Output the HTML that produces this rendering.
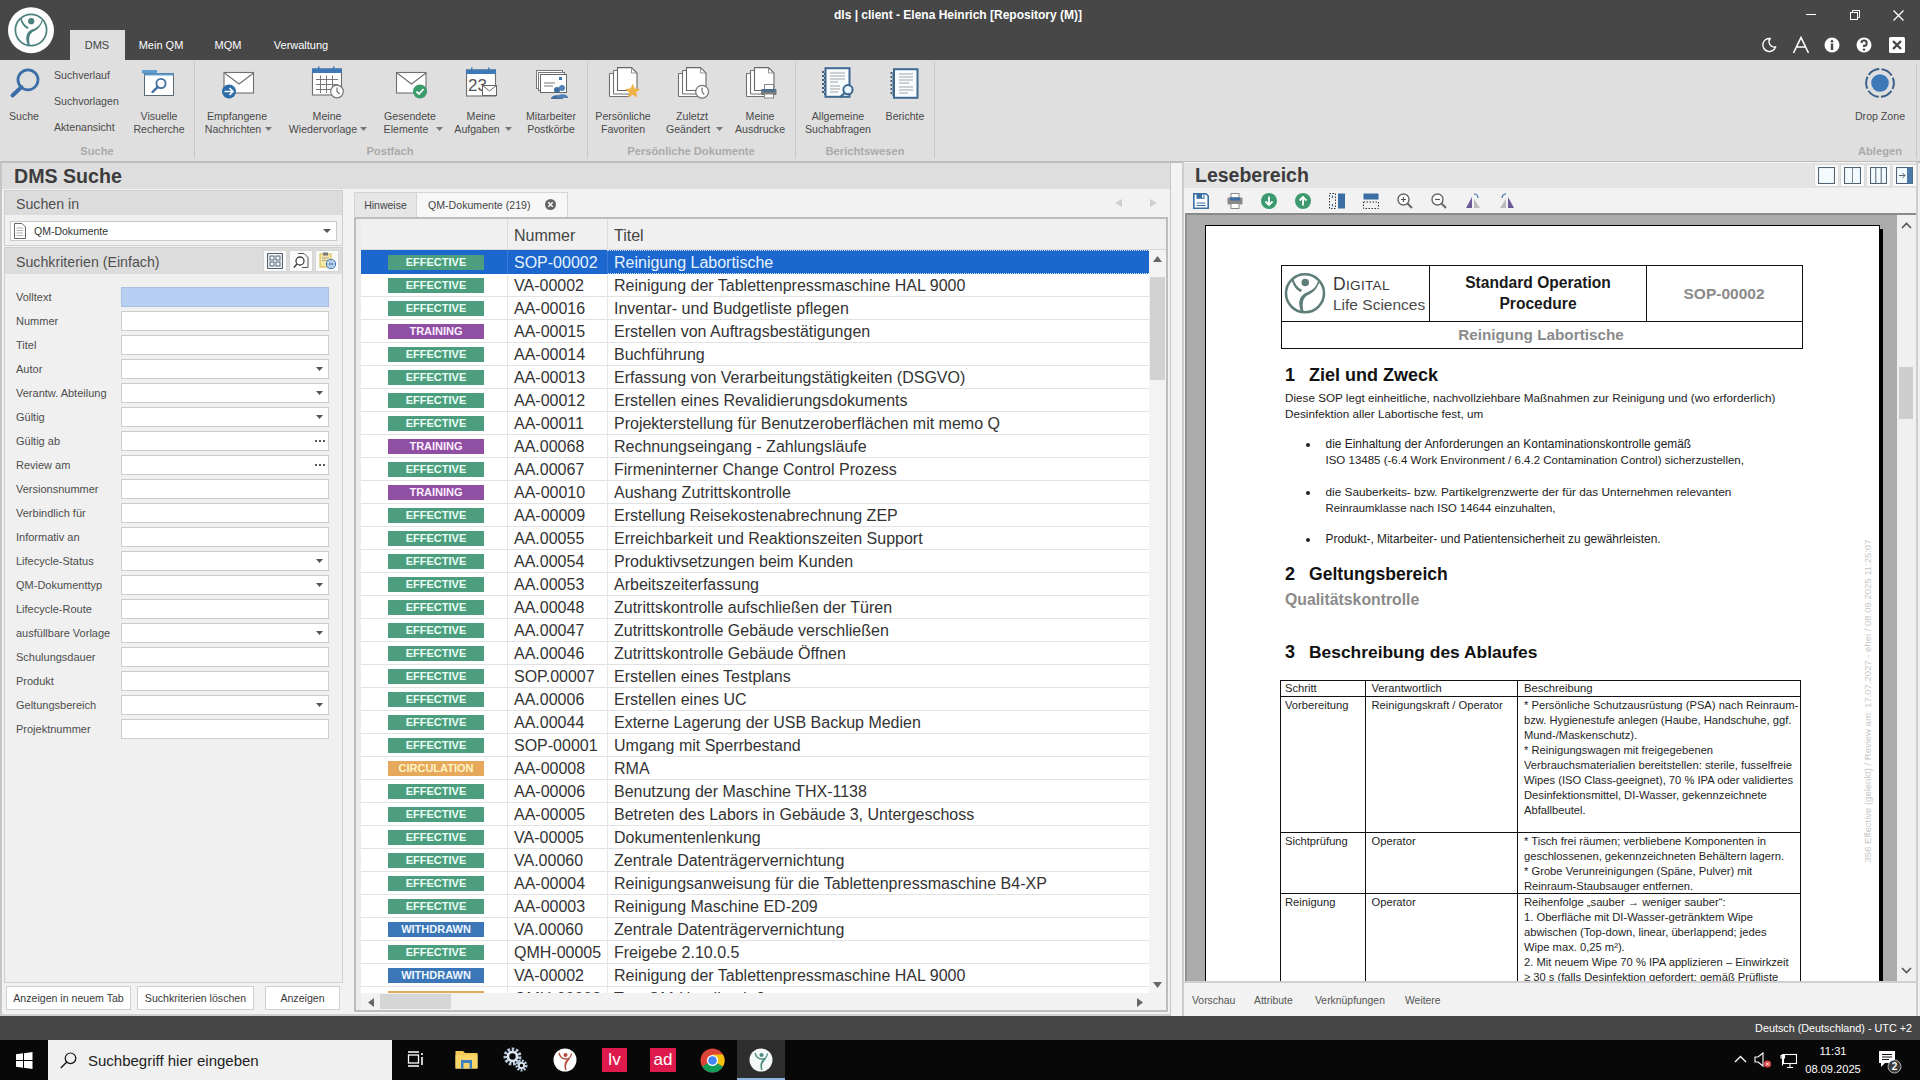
<!DOCTYPE html>
<html><head><meta charset="utf-8"><title>dls client</title><style>*{margin:0;padding:0;box-sizing:border-box}
html,body{width:1920px;height:1080px;overflow:hidden;background:#f0f0f0;font-family:"Liberation Sans",sans-serif}
body>div,body>svg{position:absolute}
.r>div{position:absolute}
</style></head>
<body>
<div style="left:0px;top:0px;width:1920px;height:60px;background:#474747"></div>
<svg style="position:absolute;left:7px;top:6px;" width="48" height="48" viewBox="0 0 48 48"><circle cx="24" cy="24.2" r="23" fill="#fdfdfd"/>
<circle cx="24" cy="24" r="15.6" fill="none" stroke="#4a817d" stroke-width="1.7"/>
<circle cx="24.2" cy="15.2" r="3.1" fill="#4a817d"/>
<path d="M13.2 12.6 L14.6 12.1 C15.6 16.6 18 19.6 21.6 21.2 L20.6 23 C16.6 21 14 17.6 13.2 12.6 Z" fill="#4a817d"/>
<path d="M34.6 14.2 C33.5 19 29.5 22 25 23.5 C21 25 19 29 19.3 33 C19.5 36 20.3 38 21 39.4 L23 39.4 C22.3 37 22 35 22.2 32.5 C22.5 28.5 24.5 26 27.5 25 C31 23.5 34 20 35.9 14.8 Z" fill="#4a817d"/></svg>
<div style="left:358px;top:6.5px;width:1200px;text-align:center;font-size:12px;color:#fff;font-weight:700;line-height:17px;white-space:pre;">dls | client - Elena Heinrich [Repository (M)]</div>
<div style="left:1806px;top:14px;width:10px;height:1px;background:#fff"></div>
<svg style="position:absolute;left:1850px;top:10px;" width="11" height="11" viewBox="0 0 11 11"><rect x="0.5" y="2.5" width="7" height="7" fill="none" stroke="#fff"/><path d="M2.5 2.5 V0.5 H9.5 V7.5 H7.5" fill="none" stroke="#fff"/></svg>
<svg style="position:absolute;left:1893px;top:10px;" width="11" height="11" viewBox="0 0 11 11"><path d="M0.5 0.5 L10.5 10.5 M10.5 0.5 L0.5 10.5" stroke="#fff" stroke-width="1.3"/></svg>
<div style="left:70px;top:30px;width:55px;height:30px;background:#dfdfdf"></div>
<div style="left:-503px;top:37.5px;width:1200px;text-align:center;font-size:11px;color:#444;font-weight:400;line-height:15px;white-space:pre;">DMS</div>
<div style="left:-439px;top:37.5px;width:1200px;text-align:center;font-size:11px;color:#fff;font-weight:400;line-height:15px;white-space:pre;">Mein QM</div>
<div style="left:-372px;top:37.5px;width:1200px;text-align:center;font-size:11px;color:#fff;font-weight:400;line-height:15px;white-space:pre;">MQM</div>
<div style="left:-299px;top:37.5px;width:1200px;text-align:center;font-size:11px;color:#fff;font-weight:400;line-height:15px;white-space:pre;">Verwaltung</div>
<svg style="position:absolute;left:1761px;top:37px;" width="16" height="16" viewBox="0 0 16 16"><path d="M9 1.5 A6.5 6.5 0 1 0 14.5 10 A5.5 5.5 0 0 1 9 1.5 Z" fill="none" stroke="#fff" stroke-width="1.4"/></svg>
<svg style="position:absolute;left:1792px;top:36px;" width="18" height="18" viewBox="0 0 18 18"><path d="M1.5 17 L9 1.5 L16.5 17 M4.5 11 H13.5" fill="none" stroke="#fff" stroke-width="1.6"/></svg>
<svg style="position:absolute;left:1824px;top:37px;" width="16" height="16" viewBox="0 0 16 16"><circle cx="8" cy="8" r="7.5" fill="#fff"/><rect x="6.8" y="6.5" width="2.4" height="6.5" fill="#474747"/><circle cx="8" cy="4.2" r="1.3" fill="#474747"/></svg>
<svg style="position:absolute;left:1856px;top:37px;" width="16" height="16" viewBox="0 0 16 16"><circle cx="8" cy="8" r="7.5" fill="#fff"/><path d="M5.5 6 A2.6 2.6 0 1 1 8 8.8 V10" fill="none" stroke="#474747" stroke-width="2"/><circle cx="8" cy="12.6" r="1.2" fill="#474747"/></svg>
<svg style="position:absolute;left:1889px;top:37px;" width="16" height="16" viewBox="0 0 16 16"><rect x="0" y="0" width="16" height="16" rx="1.5" fill="#fff"/><path d="M4 4 L12 12 M12 4 L4 12" stroke="#474747" stroke-width="2.4"/></svg>
<div style="left:0px;top:60px;width:1920px;height:101px;background:#dfdfdf"></div>
<div style="left:0px;top:161px;width:1920px;height:2px;background:#bdbdbd"></div>
<div style="left:194px;top:62px;width:1px;height:96px;background:#c8c8c8"></div>
<div style="left:587px;top:62px;width:1px;height:96px;background:#c8c8c8"></div>
<div style="left:795px;top:62px;width:1px;height:96px;background:#c8c8c8"></div>
<div style="left:934px;top:62px;width:1px;height:96px;background:#c8c8c8"></div>
<svg style="position:absolute;left:9px;top:67px;" width="32" height="32" viewBox="0 0 32 32"><circle cx="19" cy="12.8" r="10" fill="none" stroke="#3b6ea8" stroke-width="2.8"/><path d="M12.5 20 L3.5 28.5" stroke="#3b6ea8" stroke-width="4" stroke-linecap="round"/></svg>
<div style="left:-576px;top:109.0px;width:1200px;text-align:center;font-size:10.6px;color:#4a4a4a;font-weight:400;line-height:15px;white-space:pre;">Suche</div>
<div style="left:54px;top:67.5px;font-size:10.6px;color:#4a4a4a;font-weight:400;line-height:15px;white-space:pre;">Suchverlauf</div>
<div style="left:54px;top:93.5px;font-size:10.6px;color:#4a4a4a;font-weight:400;line-height:15px;white-space:pre;">Suchvorlagen</div>
<div style="left:54px;top:119.5px;font-size:10.6px;color:#4a4a4a;font-weight:400;line-height:15px;white-space:pre;">Aktenansicht</div>
<svg style="position:absolute;left:142px;top:69px;" width="34" height="30" viewBox="0 0 34 30"><rect x="0" y="1" width="15" height="3.5" fill="#5ba0d0"/><rect x="2.5" y="4.5" width="29" height="22" fill="#fff" stroke="#5a6b78" stroke-width="1"/><rect x="2.5" y="4.5" width="29" height="2" fill="#5ba0d0"/><circle cx="19" cy="14.5" r="4.6" fill="none" stroke="#3f6d9e" stroke-width="1.8"/><path d="M15.8 17.8 L10.5 23" stroke="#3f6d9e" stroke-width="2.4" stroke-linecap="round"/></svg>
<div style="left:-441px;top:109.0px;width:1200px;text-align:center;font-size:10.6px;color:#4a4a4a;font-weight:400;line-height:15px;white-space:pre;">Visuelle</div>
<div style="left:-441px;top:121.5px;width:1200px;text-align:center;font-size:10.6px;color:#4a4a4a;font-weight:400;line-height:15px;white-space:pre;">Recherche</div>
<div style="left:-503px;top:143.0px;width:1200px;text-align:center;font-size:11.2px;color:#aaa;font-weight:700;line-height:16px;white-space:pre;">Suche</div>
<svg style="position:absolute;left:219px;top:70px;" width="38" height="32" viewBox="0 0 38 32"><rect x="5" y="2.5" width="29.5" height="20.5" fill="#fff" stroke="#6f6f6f" stroke-width="1.1"/><path d="M5.5 3 L20 14 L34.5 3" fill="none" stroke="#6f6f6f" stroke-width="1.1"/><circle cx="10" cy="21.5" r="7" fill="#2f6daa"/><path d="M5.5 21.5 H14 M10.5 18 L14 21.5 L10.5 25" fill="none" stroke="#fff" stroke-width="1.6"/></svg>
<div style="left:-363px;top:109.0px;width:1200px;text-align:center;font-size:10.6px;color:#4a4a4a;font-weight:400;line-height:15px;white-space:pre;">Empfangene</div>
<div style="left:-367px;top:121.5px;width:1200px;text-align:center;font-size:10.6px;color:#4a4a4a;font-weight:400;line-height:15px;white-space:pre;">Nachrichten</div>
<svg style="position:absolute;left:265px;top:127px;" width="7" height="4" viewBox="0 0 7 4"><path d="M0 0 H7 L3.5 4 Z" fill="#777"/></svg>
<svg style="position:absolute;left:310px;top:66px;" width="36" height="33" viewBox="0 0 36 33"><rect x="2.5" y="3" width="29" height="26" fill="#fff" stroke="#6f6f6f" stroke-width="1.1"/><rect x="2" y="2.5" width="30" height="4.5" fill="#3f78b6"/><rect x="8" y="0.5" width="1.5" height="4" fill="#3f78b6"/><rect x="23" y="0.5" width="1.5" height="4" fill="#3f78b6"/><path d="M6 13.5 H28 M6 18.5 H28 M6 23.5 H22 M10.5 9.5 V27 M16.5 9.5 V27 M22.5 9.5 V21" stroke="#777" stroke-width="1"/><circle cx="27" cy="25.5" r="6.3" fill="#fff" stroke="#777" stroke-width="1.2"/><path d="M27 21.5 V25.5 L29.5 28" fill="none" stroke="#666" stroke-width="1.1"/></svg>
<div style="left:-273px;top:109.0px;width:1200px;text-align:center;font-size:10.6px;color:#4a4a4a;font-weight:400;line-height:15px;white-space:pre;">Meine</div>
<div style="left:-277px;top:121.5px;width:1200px;text-align:center;font-size:10.6px;color:#4a4a4a;font-weight:400;line-height:15px;white-space:pre;">Wiedervorlage</div>
<svg style="position:absolute;left:360px;top:127px;" width="7" height="4" viewBox="0 0 7 4"><path d="M0 0 H7 L3.5 4 Z" fill="#777"/></svg>
<svg style="position:absolute;left:394px;top:70px;" width="36" height="32" viewBox="0 0 36 32"><rect x="2.5" y="2.5" width="29.5" height="20.5" fill="#fff" stroke="#6f6f6f" stroke-width="1.1"/><path d="M3 3 L17.5 14 L32 3" fill="none" stroke="#6f6f6f" stroke-width="1.1"/><circle cx="26" cy="21.5" r="7" fill="#3a9b6b"/><path d="M22.5 21.5 L25 24 L29.5 19" fill="none" stroke="#fff" stroke-width="1.8"/></svg>
<div style="left:-190px;top:109.0px;width:1200px;text-align:center;font-size:10.6px;color:#4a4a4a;font-weight:400;line-height:15px;white-space:pre;">Gesendete</div>
<div style="left:-194px;top:121.5px;width:1200px;text-align:center;font-size:10.6px;color:#4a4a4a;font-weight:400;line-height:15px;white-space:pre;">Elemente</div>
<svg style="position:absolute;left:436px;top:127px;" width="7" height="4" viewBox="0 0 7 4"><path d="M0 0 H7 L3.5 4 Z" fill="#777"/></svg>
<svg style="position:absolute;left:465px;top:67px;" width="34" height="33" viewBox="0 0 34 33"><rect x="1.5" y="3" width="29" height="26" fill="#fff" stroke="#6f6f6f" stroke-width="1.1"/><rect x="1" y="2.5" width="30" height="4.5" fill="#3f78b6"/><rect x="6" y="0.5" width="1.5" height="4" fill="#3f78b6"/><rect x="23" y="0.5" width="1.5" height="4" fill="#3f78b6"/><text x="3" y="24" font-family="Liberation Sans" font-size="17" fill="#555">23</text><rect x="17.5" y="18.5" width="14" height="10" fill="#fff" stroke="#666"/><path d="M17.5 18.5 L24.5 24 L31.5 18.5" fill="none" stroke="#666"/></svg>
<div style="left:-119px;top:109.0px;width:1200px;text-align:center;font-size:10.6px;color:#4a4a4a;font-weight:400;line-height:15px;white-space:pre;">Meine</div>
<div style="left:-123px;top:121.5px;width:1200px;text-align:center;font-size:10.6px;color:#4a4a4a;font-weight:400;line-height:15px;white-space:pre;">Aufgaben</div>
<svg style="position:absolute;left:505px;top:127px;" width="7" height="4" viewBox="0 0 7 4"><path d="M0 0 H7 L3.5 4 Z" fill="#777"/></svg>
<svg style="position:absolute;left:535px;top:69px;" width="34" height="32" viewBox="0 0 34 32"><rect x="1.5" y="1.5" width="26" height="18" fill="#fff" stroke="#777"/><rect x="3.5" y="3.5" width="26" height="18" fill="#fff" stroke="#777"/><rect x="5.5" y="5.5" width="26" height="18" fill="#fff" stroke="#666"/><rect x="24" y="8" width="3" height="3" fill="#3f78b6"/><path d="M9 14 H20 M9 17 H18" stroke="#777"/><circle cx="22" cy="21" r="3" fill="#3f6d9e"/><path d="M16 30 C16 25 28 25 28 30 Z" fill="#3f6d9e"/><circle cx="27" cy="19" r="3" fill="#4f80b6"/><path d="M22 29 C22 24 33 24 33 29 Z" fill="#4f80b6"/></svg>
<div style="left:-49px;top:109.0px;width:1200px;text-align:center;font-size:10.6px;color:#4a4a4a;font-weight:400;line-height:15px;white-space:pre;">Mitarbeiter</div>
<div style="left:-49px;top:121.5px;width:1200px;text-align:center;font-size:10.6px;color:#4a4a4a;font-weight:400;line-height:15px;white-space:pre;">Postkörbe</div>
<div style="left:-210px;top:143.0px;width:1200px;text-align:center;font-size:11.2px;color:#aaa;font-weight:700;line-height:16px;white-space:pre;">Postfach</div>
<svg style="position:absolute;left:608px;top:67px;" width="34" height="33" viewBox="0 0 34 33"><rect x="1.5" y="6.5" width="19.5" height="23" rx="0.8" fill="#fff" stroke="#707070" stroke-width="1.1"/><rect x="5.5" y="3.5" width="19.5" height="23.5" rx="0.8" fill="#fff" stroke="#707070" stroke-width="1.1"/><path d="M9.5 0.6 H23.5 L29 6 V23.5 H9.5 Z" fill="#fff" stroke="#666" stroke-width="1.1"/><path d="M23.5 0.6 V6 H29" fill="none" stroke="#888" stroke-width="0.9"/><path d="M24.7 16.5 L26.9 21.6 L32.3 21.9 L28.2 25.4 L29.5 30.8 L24.7 27.8 L19.9 30.8 L21.2 25.4 L17.1 21.9 L22.5 21.6 Z" fill="#f0b24a"/></svg>
<div style="left:23px;top:109.0px;width:1200px;text-align:center;font-size:10.6px;color:#4a4a4a;font-weight:400;line-height:15px;white-space:pre;">Persönliche</div>
<div style="left:23px;top:121.5px;width:1200px;text-align:center;font-size:10.6px;color:#4a4a4a;font-weight:400;line-height:15px;white-space:pre;">Favoriten</div>
<svg style="position:absolute;left:677px;top:67px;" width="34" height="33" viewBox="0 0 34 33"><rect x="1.5" y="6.5" width="19.5" height="23" rx="0.8" fill="#fff" stroke="#707070" stroke-width="1.1"/><rect x="5.5" y="3.5" width="19.5" height="23.5" rx="0.8" fill="#fff" stroke="#707070" stroke-width="1.1"/><path d="M9.5 0.6 H23.5 L29 6 V23.5 H9.5 Z" fill="#fff" stroke="#666" stroke-width="1.1"/><path d="M23.5 0.6 V6 H29" fill="none" stroke="#888" stroke-width="0.9"/><circle cx="25.1" cy="24.7" r="6.4" fill="#fff" stroke="#777" stroke-width="1.2"/><path d="M25.1 20.7 V24.9 L27.3 27.6" fill="none" stroke="#666" stroke-width="1.1"/></svg>
<div style="left:92px;top:109.0px;width:1200px;text-align:center;font-size:10.6px;color:#4a4a4a;font-weight:400;line-height:15px;white-space:pre;">Zuletzt</div>
<div style="left:88px;top:121.5px;width:1200px;text-align:center;font-size:10.6px;color:#4a4a4a;font-weight:400;line-height:15px;white-space:pre;">Geändert</div>
<svg style="position:absolute;left:716px;top:127px;" width="7" height="4" viewBox="0 0 7 4"><path d="M0 0 H7 L3.5 4 Z" fill="#777"/></svg>
<svg style="position:absolute;left:745px;top:67px;" width="34" height="33" viewBox="0 0 34 33"><rect x="1.5" y="6.5" width="19.5" height="23" rx="0.8" fill="#fff" stroke="#707070" stroke-width="1.1"/><rect x="5.5" y="3.5" width="19.5" height="23.5" rx="0.8" fill="#fff" stroke="#707070" stroke-width="1.1"/><path d="M9.5 0.6 H23.5 L29 6 V23.5 H9.5 Z" fill="#fff" stroke="#666" stroke-width="1.1"/><path d="M23.5 0.6 V6 H29" fill="none" stroke="#888" stroke-width="0.9"/><rect x="19.5" y="17.5" width="9" height="5" fill="#fff" stroke="#888"/><rect x="16" y="22" width="15.5" height="6" rx="1" fill="#7a7a7a"/><rect x="17" y="22" width="13.5" height="2.6" fill="#4a6f96"/><rect x="19.5" y="27" width="9" height="4" fill="#fff" stroke="#888"/></svg>
<div style="left:160px;top:109.0px;width:1200px;text-align:center;font-size:10.6px;color:#4a4a4a;font-weight:400;line-height:15px;white-space:pre;">Meine</div>
<div style="left:160px;top:121.5px;width:1200px;text-align:center;font-size:10.6px;color:#4a4a4a;font-weight:400;line-height:15px;white-space:pre;">Ausdrucke</div>
<div style="left:91px;top:143.0px;width:1200px;text-align:center;font-size:11.2px;color:#aaa;font-weight:700;line-height:16px;white-space:pre;">Persönliche Dokumente</div>
<svg style="position:absolute;left:821px;top:66px;" width="34" height="34" viewBox="0 0 34 34"><rect x="4.5" y="2.2" width="24" height="28.6" fill="#f7fcff" stroke="#3f6892" stroke-width="2"/><rect x="1" y="5" width="2" height="2" fill="#3d5f80"/><rect x="3" y="7" width="2" height="2" fill="#3d5f80"/><rect x="1" y="9" width="2" height="2" fill="#3d5f80"/><rect x="3" y="11" width="2" height="2" fill="#3d5f80"/><rect x="1" y="13" width="2" height="2" fill="#3d5f80"/><rect x="3" y="15" width="2" height="2" fill="#3d5f80"/><rect x="1" y="17" width="2" height="2" fill="#3d5f80"/><rect x="3" y="19" width="2" height="2" fill="#3d5f80"/><rect x="1" y="21" width="2" height="2" fill="#3d5f80"/><rect x="3" y="23" width="2" height="2" fill="#3d5f80"/><rect x="1" y="25" width="2" height="2" fill="#3d5f80"/><rect x="3" y="27" width="2" height="2" fill="#3d5f80"/><path d="M9 7 H24 M9 10 H24 M9 13 H24 M9 16 H17 M9 20 H19 M9 23 H19 M9 26 H17" stroke="#999" stroke-width="0.9"/><circle cx="27" cy="23.7" r="4.6" fill="#eaf4fb" stroke="#3f6892" stroke-width="2"/><path d="M23.5 27 L19.5 31" stroke="#3f6892" stroke-width="2.3" stroke-linecap="round"/></svg>
<div style="left:238px;top:109.0px;width:1200px;text-align:center;font-size:10.6px;color:#4a4a4a;font-weight:400;line-height:15px;white-space:pre;">Allgemeine</div>
<div style="left:238px;top:121.5px;width:1200px;text-align:center;font-size:10.6px;color:#4a4a4a;font-weight:400;line-height:15px;white-space:pre;">Suchabfragen</div>
<svg style="position:absolute;left:889px;top:66px;" width="34" height="34" viewBox="0 0 34 34"><rect x="5" y="3.2" width="23.5" height="28.6" fill="#f7fcff" stroke="#3f6892" stroke-width="2"/><rect x="1.5" y="6" width="2" height="2" fill="#3d5f80"/><rect x="3.5" y="8" width="2" height="2" fill="#3d5f80"/><rect x="1.5" y="10" width="2" height="2" fill="#3d5f80"/><rect x="3.5" y="12" width="2" height="2" fill="#3d5f80"/><rect x="1.5" y="14" width="2" height="2" fill="#3d5f80"/><rect x="3.5" y="16" width="2" height="2" fill="#3d5f80"/><rect x="1.5" y="18" width="2" height="2" fill="#3d5f80"/><rect x="3.5" y="20" width="2" height="2" fill="#3d5f80"/><rect x="1.5" y="22" width="2" height="2" fill="#3d5f80"/><rect x="3.5" y="24" width="2" height="2" fill="#3d5f80"/><rect x="1.5" y="26" width="2" height="2" fill="#3d5f80"/><rect x="3.5" y="28" width="2" height="2" fill="#3d5f80"/><path d="M10 8 H24 M10 11 H24 M10 14 H24 M10 17 H20 M10 21 H24 M10 24 H24 M10 27 H19" stroke="#999" stroke-width="0.9"/></svg>
<div style="left:305px;top:109.0px;width:1200px;text-align:center;font-size:10.6px;color:#4a4a4a;font-weight:400;line-height:15px;white-space:pre;">Berichte</div>
<div style="left:265px;top:143.0px;width:1200px;text-align:center;font-size:11.2px;color:#aaa;font-weight:700;line-height:16px;white-space:pre;">Berichtswesen</div>
<svg style="position:absolute;left:1864px;top:67px;" width="32" height="32" viewBox="0 0 32 32"><circle cx="16" cy="16" r="13.9" fill="none" stroke="#3d6088" stroke-width="2" stroke-dasharray="12.25 2.3" stroke-dashoffset="6.12"/><circle cx="16" cy="16" r="8.8" fill="#3d78b8"/></svg>
<div style="left:1916px;top:64px;width:1px;height:94px;background:#c8c8c8"></div>
<div style="left:1280px;top:109.0px;width:1200px;text-align:center;font-size:10.6px;color:#4a4a4a;font-weight:400;line-height:15px;white-space:pre;">Drop Zone</div>
<div style="left:1280px;top:143.0px;width:1200px;text-align:center;font-size:11.2px;color:#aaa;font-weight:700;line-height:16px;white-space:pre;">Ablegen</div>
<div style="left:0px;top:163px;width:1920px;height:853px;background:#f0f0f0"></div>
<div style="left:0px;top:1016px;width:1920px;height:24px;background:#474747"></div>
<div style="left:712px;top:1020.5px;width:1200px;text-align:right;font-size:10.8px;color:#fff;font-weight:400;line-height:15px;white-space:pre;">Deutsch (Deutschland) - UTC +2</div>
<div style="left:0px;top:1040px;width:1920px;height:40px;background:#080808"></div>
<div style="left:0px;top:163px;width:1171px;height:853px;background:#f2f2f2;border-left:2px solid #c6c6c6;border-right:1px solid #c6c6c6;border-bottom:2px solid #d0d0d0"></div>
<div style="left:2px;top:163px;width:1168px;height:26px;background:#dedede"></div>
<div style="left:14px;top:163.0px;font-size:19.6px;color:#3c3c3c;font-weight:700;line-height:27px;white-space:pre;">DMS Suche</div>
<div style="left:4px;top:190px;width:339px;height:56px;background:#f0f0f0;border:1px solid #cfcfcf"></div>
<div style="left:5px;top:191px;width:337px;height:24px;background:#dcdcdc"></div>
<div style="left:16px;top:193.5px;font-size:14.2px;color:#505050;font-weight:400;line-height:20px;white-space:pre;">Suchen in</div>
<div style="left:10px;top:221px;width:327px;height:20px;background:#fff;border:1px solid #c9c9c9"></div>
<svg style="position:absolute;left:14px;top:223px;" width="12" height="16" viewBox="0 0 12 16"><path d="M0.5 0.5 H8 L11.5 4 V15.5 H0.5 Z" fill="#fff" stroke="#666"/><path d="M2.5 5 H9 M2.5 7.5 H9 M2.5 10 H9 M2.5 12.5 H9" stroke="#999" stroke-width="0.8"/></svg>
<div style="left:34px;top:223.5px;font-size:10.5px;color:#333;font-weight:400;line-height:15px;white-space:pre;">QM-Dokumente</div>
<svg style="position:absolute;left:323px;top:229px;" width="8" height="4" viewBox="0 0 8 4"><path d="M0 0 H8 L4 4 Z" fill="#555"/></svg>
<div style="left:4px;top:247px;width:339px;height:736px;background:#f0f0f0;border:1px solid #cfcfcf"></div>
<div style="left:5px;top:248px;width:337px;height:26px;background:#dcdcdc"></div>
<div style="left:16px;top:251.5px;font-size:14.2px;color:#505050;font-weight:400;line-height:20px;white-space:pre;">Suchkriterien (Einfach)</div>
<div style="left:263px;top:250px;width:24px;height:22px;background:#fafafa;border:1px solid #d6d6d6"></div>
<div style="left:289px;top:250px;width:24px;height:22px;background:#fafafa;border:1px solid #d6d6d6"></div>
<div style="left:315px;top:250px;width:24px;height:22px;background:#fafafa;border:1px solid #d6d6d6"></div>
<svg style="position:absolute;left:267px;top:253px;" width="16" height="16" viewBox="0 0 16 16"><rect x="0.5" y="0.5" width="15" height="15" rx="1" fill="none" stroke="#4f6272" stroke-width="1.2"/><rect x="3" y="3" width="4" height="4" fill="none" stroke="#4f6272"/><rect x="9" y="3" width="4" height="4" fill="none" stroke="#4f6272"/><rect x="3" y="9" width="4" height="4" fill="none" stroke="#4f6272"/><rect x="9" y="9" width="4" height="4" fill="none" stroke="#4f6272"/></svg>
<svg style="position:absolute;left:293px;top:253px;" width="16" height="16" viewBox="0 0 16 16"><path d="M5 0.5 H11 L15 4.5 V14.5 H9" fill="none" stroke="#555"/><circle cx="7" cy="8" r="4" fill="#fff" stroke="#444" stroke-width="1.3"/><path d="M4 11 L0.8 14.5" stroke="#444" stroke-width="1.6"/></svg>
<svg style="position:absolute;left:319px;top:252px;" width="17" height="17" viewBox="0 0 17 17"><rect x="1" y="2" width="11" height="13" fill="#f5e7a8" stroke="#d8b74a"/><rect x="4" y="0.5" width="5" height="3" fill="#777"/><path d="M3 6 H10 M3 8.5 H10" stroke="#999" stroke-width="0.8"/><circle cx="12" cy="12" r="4.5" fill="#fff" stroke="#3f78b6" stroke-width="1.2"/><path d="M7.5 12 H16.5 M12 7.5 V16.5 M9.5 9 C11 11 11 13 9.5 15 M14.5 9 C13 11 13 13 14.5 15" fill="none" stroke="#3f78b6" stroke-width="0.8"/></svg>
<div style="left:16px;top:288.5px;font-size:11.0px;color:#4d4d4d;font-weight:400;line-height:16px;white-space:pre;">Volltext</div>
<div style="left:121px;top:287px;width:208px;height:20px;background:#b7cff2;border:1px solid #a9bfdf"></div>
<div style="left:16px;top:312.5px;font-size:11.0px;color:#4d4d4d;font-weight:400;line-height:16px;white-space:pre;">Nummer</div>
<div style="left:121px;top:311px;width:208px;height:20px;background:#fff;border:1px solid #cdcdcd"></div>
<div style="left:16px;top:336.5px;font-size:11.0px;color:#4d4d4d;font-weight:400;line-height:16px;white-space:pre;">Titel</div>
<div style="left:121px;top:335px;width:208px;height:20px;background:#fff;border:1px solid #cdcdcd"></div>
<div style="left:16px;top:360.5px;font-size:11.0px;color:#4d4d4d;font-weight:400;line-height:16px;white-space:pre;">Autor</div>
<div style="left:121px;top:359px;width:208px;height:20px;background:#fff;border:1px solid #cdcdcd"></div>
<svg style="position:absolute;left:316px;top:367px;" width="7" height="4" viewBox="0 0 7 4"><path d="M0 0 H7 L3.5 4 Z" fill="#555"/></svg>
<div style="left:16px;top:384.5px;font-size:11.0px;color:#4d4d4d;font-weight:400;line-height:16px;white-space:pre;">Verantw. Abteilung</div>
<div style="left:121px;top:383px;width:208px;height:20px;background:#fff;border:1px solid #cdcdcd"></div>
<svg style="position:absolute;left:316px;top:391px;" width="7" height="4" viewBox="0 0 7 4"><path d="M0 0 H7 L3.5 4 Z" fill="#555"/></svg>
<div style="left:16px;top:408.5px;font-size:11.0px;color:#4d4d4d;font-weight:400;line-height:16px;white-space:pre;">Gültig</div>
<div style="left:121px;top:407px;width:208px;height:20px;background:#fff;border:1px solid #cdcdcd"></div>
<svg style="position:absolute;left:316px;top:415px;" width="7" height="4" viewBox="0 0 7 4"><path d="M0 0 H7 L3.5 4 Z" fill="#555"/></svg>
<div style="left:16px;top:432.5px;font-size:11.0px;color:#4d4d4d;font-weight:400;line-height:16px;white-space:pre;">Gültig ab</div>
<div style="left:121px;top:431px;width:208px;height:20px;background:#fff;border:1px solid #cdcdcd"></div>
<svg style="position:absolute;left:315px;top:440px;" width="10" height="2" viewBox="0 0 10 2"><rect x="0" y="0" width="2" height="2" fill="#555"/><rect x="4" y="0" width="2" height="2" fill="#555"/><rect x="8" y="0" width="2" height="2" fill="#555"/></svg>
<div style="left:16px;top:456.5px;font-size:11.0px;color:#4d4d4d;font-weight:400;line-height:16px;white-space:pre;">Review am</div>
<div style="left:121px;top:455px;width:208px;height:20px;background:#fff;border:1px solid #cdcdcd"></div>
<svg style="position:absolute;left:315px;top:464px;" width="10" height="2" viewBox="0 0 10 2"><rect x="0" y="0" width="2" height="2" fill="#555"/><rect x="4" y="0" width="2" height="2" fill="#555"/><rect x="8" y="0" width="2" height="2" fill="#555"/></svg>
<div style="left:16px;top:480.5px;font-size:11.0px;color:#4d4d4d;font-weight:400;line-height:16px;white-space:pre;">Versionsnummer</div>
<div style="left:121px;top:479px;width:208px;height:20px;background:#fff;border:1px solid #cdcdcd"></div>
<div style="left:16px;top:504.5px;font-size:11.0px;color:#4d4d4d;font-weight:400;line-height:16px;white-space:pre;">Verbindlich für</div>
<div style="left:121px;top:503px;width:208px;height:20px;background:#fff;border:1px solid #cdcdcd"></div>
<div style="left:16px;top:528.5px;font-size:11.0px;color:#4d4d4d;font-weight:400;line-height:16px;white-space:pre;">Informativ an</div>
<div style="left:121px;top:527px;width:208px;height:20px;background:#fff;border:1px solid #cdcdcd"></div>
<div style="left:16px;top:552.5px;font-size:11.0px;color:#4d4d4d;font-weight:400;line-height:16px;white-space:pre;">Lifecycle-Status</div>
<div style="left:121px;top:551px;width:208px;height:20px;background:#fff;border:1px solid #cdcdcd"></div>
<svg style="position:absolute;left:316px;top:559px;" width="7" height="4" viewBox="0 0 7 4"><path d="M0 0 H7 L3.5 4 Z" fill="#555"/></svg>
<div style="left:16px;top:576.5px;font-size:11.0px;color:#4d4d4d;font-weight:400;line-height:16px;white-space:pre;">QM-Dokumenttyp</div>
<div style="left:121px;top:575px;width:208px;height:20px;background:#fff;border:1px solid #cdcdcd"></div>
<svg style="position:absolute;left:316px;top:583px;" width="7" height="4" viewBox="0 0 7 4"><path d="M0 0 H7 L3.5 4 Z" fill="#555"/></svg>
<div style="left:16px;top:600.5px;font-size:11.0px;color:#4d4d4d;font-weight:400;line-height:16px;white-space:pre;">Lifecycle-Route</div>
<div style="left:121px;top:599px;width:208px;height:20px;background:#fff;border:1px solid #cdcdcd"></div>
<div style="left:16px;top:624.5px;font-size:11.0px;color:#4d4d4d;font-weight:400;line-height:16px;white-space:pre;">ausfüllbare Vorlage</div>
<div style="left:121px;top:623px;width:208px;height:20px;background:#fff;border:1px solid #cdcdcd"></div>
<svg style="position:absolute;left:316px;top:631px;" width="7" height="4" viewBox="0 0 7 4"><path d="M0 0 H7 L3.5 4 Z" fill="#555"/></svg>
<div style="left:16px;top:648.5px;font-size:11.0px;color:#4d4d4d;font-weight:400;line-height:16px;white-space:pre;">Schulungsdauer</div>
<div style="left:121px;top:647px;width:208px;height:20px;background:#fff;border:1px solid #cdcdcd"></div>
<div style="left:16px;top:672.5px;font-size:11.0px;color:#4d4d4d;font-weight:400;line-height:16px;white-space:pre;">Produkt</div>
<div style="left:121px;top:671px;width:208px;height:20px;background:#fff;border:1px solid #cdcdcd"></div>
<div style="left:16px;top:696.5px;font-size:11.0px;color:#4d4d4d;font-weight:400;line-height:16px;white-space:pre;">Geltungsbereich</div>
<div style="left:121px;top:695px;width:208px;height:20px;background:#fff;border:1px solid #cdcdcd"></div>
<svg style="position:absolute;left:316px;top:703px;" width="7" height="4" viewBox="0 0 7 4"><path d="M0 0 H7 L3.5 4 Z" fill="#555"/></svg>
<div style="left:16px;top:720.5px;font-size:11.0px;color:#4d4d4d;font-weight:400;line-height:16px;white-space:pre;">Projektnummer</div>
<div style="left:121px;top:719px;width:208px;height:20px;background:#fff;border:1px solid #cdcdcd"></div>
<div style="left:6px;top:986px;width:125px;height:24px;background:#fff;border:1px solid #cfcfcf"></div>
<div style="left:-531.5px;top:991.0px;width:1200px;text-align:center;font-size:10.6px;color:#3a3a3a;font-weight:400;line-height:15px;white-space:pre;">Anzeigen in neuem Tab</div>
<div style="left:137px;top:986px;width:117px;height:24px;background:#fff;border:1px solid #cfcfcf"></div>
<div style="left:-404.5px;top:991.0px;width:1200px;text-align:center;font-size:10.6px;color:#3a3a3a;font-weight:400;line-height:15px;white-space:pre;">Suchkriterien löschen</div>
<div style="left:265px;top:986px;width:75px;height:24px;background:#fff;border:1px solid #cfcfcf"></div>
<div style="left:-297.5px;top:991.0px;width:1200px;text-align:center;font-size:10.6px;color:#3a3a3a;font-weight:400;line-height:15px;white-space:pre;">Anzeigen</div>
<div style="left:354px;top:192px;width:63px;height:26px;background:#e6e6e6;border:1px solid #d4d4d4;border-bottom:none"></div>
<div style="left:-214.5px;top:197.5px;width:1200px;text-align:center;font-size:10.5px;color:#444;font-weight:400;line-height:15px;white-space:pre;">Hinweise</div>
<div style="left:417px;top:192px;width:151px;height:26px;background:#f7f7f7;border:1px solid #d4d4d4;border-bottom:none;border-left:none"></div>
<div style="left:428px;top:197.5px;font-size:10.6px;color:#444;font-weight:400;line-height:15px;white-space:pre;">QM-Dokumente (219)</div>
<svg style="position:absolute;left:545px;top:199px;" width="11" height="11" viewBox="0 0 11 11"><circle cx="5.5" cy="5.5" r="5.5" fill="#666"/><path d="M3.3 3.3 L7.7 7.7 M7.7 3.3 L3.3 7.7" stroke="#fff" stroke-width="1.4"/></svg>
<svg style="position:absolute;left:1115px;top:199px;" width="7" height="8" viewBox="0 0 7 8"><path d="M7 0 V8 L0 4 Z" fill="#cfcfcf"/></svg>
<svg style="position:absolute;left:1150px;top:199px;" width="7" height="8" viewBox="0 0 7 8"><path d="M0 0 V8 L7 4 Z" fill="#cfcfcf"/></svg>
<div style="left:354px;top:217px;width:814px;height:795px;background:#fff;border:2px solid #bdbdbd"></div>
<div style="left:356px;top:219px;width:5px;height:791px;background:#ececec"></div>
<div style="left:361px;top:219px;width:805px;height:31px;background:#f0f0f0;border-bottom:1px solid #d8d8d8"></div>
<div style="left:507px;top:219px;width:1px;height:31px;background:#dcdcdc"></div>
<div style="left:607px;top:219px;width:1px;height:31px;background:#dcdcdc"></div>
<div style="left:514px;top:225.0px;font-size:16px;color:#444;font-weight:400;line-height:22px;white-space:pre;">Nummer</div>
<div style="left:614px;top:225.0px;font-size:16px;color:#444;font-weight:400;line-height:22px;white-space:pre;">Titel</div>
<div class="r" style="left:361px;top:250px;width:788px;height:743px;overflow:hidden">
<div style="left:0;top:0;width:788px;height:24px;background:#1b67cd"></div>
<div style="left:246px;top:0;width:542px;height:24px;border:1px dotted #cfe6ff;border-right:none"></div>
<div style="left:146px;top:1px;width:1px;height:23px;background:#3a7ad6"></div>
<div style="left:246px;top:1px;width:1px;height:23px;background:#3a7ad6"></div>
<div style="left:27px;top:5px;width:96px;height:15px;background:#4c9e7e;color:#eafff5;font-size:11px;font-weight:700;line-height:15px;text-align:center">EFFECTIVE</div>
<div style="left:153px;top:1px;font-size:16px;line-height:23px;color:#e6f3ff;white-space:pre">SOP-00002</div>
<div style="left:253px;top:1px;font-size:16px;line-height:23px;color:#e6f3ff;white-space:pre">Reinigung Labortische</div>
<div style="left:0;top:46px;width:788px;height:1px;background:#e2e2e2"></div>
<div style="left:146px;top:24px;width:1px;height:23px;background:#e6e6e6"></div>
<div style="left:246px;top:24px;width:1px;height:23px;background:#e6e6e6"></div>
<div style="left:27px;top:28px;width:96px;height:15px;background:#4c9e7e;color:#eafff5;font-size:11px;font-weight:700;line-height:15px;text-align:center">EFFECTIVE</div>
<div style="left:153px;top:24px;font-size:16px;line-height:23px;color:#333;white-space:pre">VA-00002</div>
<div style="left:253px;top:24px;font-size:16px;line-height:23px;color:#333;white-space:pre">Reinigung der Tablettenpressmaschine HAL 9000</div>
<div style="left:0;top:69px;width:788px;height:1px;background:#e2e2e2"></div>
<div style="left:146px;top:47px;width:1px;height:23px;background:#e6e6e6"></div>
<div style="left:246px;top:47px;width:1px;height:23px;background:#e6e6e6"></div>
<div style="left:27px;top:51px;width:96px;height:15px;background:#4c9e7e;color:#eafff5;font-size:11px;font-weight:700;line-height:15px;text-align:center">EFFECTIVE</div>
<div style="left:153px;top:47px;font-size:16px;line-height:23px;color:#333;white-space:pre">AA-00016</div>
<div style="left:253px;top:47px;font-size:16px;line-height:23px;color:#333;white-space:pre">Inventar- und Budgetliste pflegen</div>
<div style="left:0;top:92px;width:788px;height:1px;background:#e2e2e2"></div>
<div style="left:146px;top:70px;width:1px;height:23px;background:#e6e6e6"></div>
<div style="left:246px;top:70px;width:1px;height:23px;background:#e6e6e6"></div>
<div style="left:27px;top:74px;width:96px;height:15px;background:#8f4fa3;color:#fbeeff;font-size:11px;font-weight:700;line-height:15px;text-align:center">TRAINING</div>
<div style="left:153px;top:70px;font-size:16px;line-height:23px;color:#333;white-space:pre">AA-00015</div>
<div style="left:253px;top:70px;font-size:16px;line-height:23px;color:#333;white-space:pre">Erstellen von Auftragsbestätigungen</div>
<div style="left:0;top:115px;width:788px;height:1px;background:#e2e2e2"></div>
<div style="left:146px;top:93px;width:1px;height:23px;background:#e6e6e6"></div>
<div style="left:246px;top:93px;width:1px;height:23px;background:#e6e6e6"></div>
<div style="left:27px;top:97px;width:96px;height:15px;background:#4c9e7e;color:#eafff5;font-size:11px;font-weight:700;line-height:15px;text-align:center">EFFECTIVE</div>
<div style="left:153px;top:93px;font-size:16px;line-height:23px;color:#333;white-space:pre">AA-00014</div>
<div style="left:253px;top:93px;font-size:16px;line-height:23px;color:#333;white-space:pre">Buchführung</div>
<div style="left:0;top:138px;width:788px;height:1px;background:#e2e2e2"></div>
<div style="left:146px;top:116px;width:1px;height:23px;background:#e6e6e6"></div>
<div style="left:246px;top:116px;width:1px;height:23px;background:#e6e6e6"></div>
<div style="left:27px;top:120px;width:96px;height:15px;background:#4c9e7e;color:#eafff5;font-size:11px;font-weight:700;line-height:15px;text-align:center">EFFECTIVE</div>
<div style="left:153px;top:116px;font-size:16px;line-height:23px;color:#333;white-space:pre">AA-00013</div>
<div style="left:253px;top:116px;font-size:16px;line-height:23px;color:#333;white-space:pre">Erfassung von Verarbeitungstätigkeiten (DSGVO)</div>
<div style="left:0;top:161px;width:788px;height:1px;background:#e2e2e2"></div>
<div style="left:146px;top:139px;width:1px;height:23px;background:#e6e6e6"></div>
<div style="left:246px;top:139px;width:1px;height:23px;background:#e6e6e6"></div>
<div style="left:27px;top:143px;width:96px;height:15px;background:#4c9e7e;color:#eafff5;font-size:11px;font-weight:700;line-height:15px;text-align:center">EFFECTIVE</div>
<div style="left:153px;top:139px;font-size:16px;line-height:23px;color:#333;white-space:pre">AA-00012</div>
<div style="left:253px;top:139px;font-size:16px;line-height:23px;color:#333;white-space:pre">Erstellen eines Revalidierungsdokuments</div>
<div style="left:0;top:184px;width:788px;height:1px;background:#e2e2e2"></div>
<div style="left:146px;top:162px;width:1px;height:23px;background:#e6e6e6"></div>
<div style="left:246px;top:162px;width:1px;height:23px;background:#e6e6e6"></div>
<div style="left:27px;top:166px;width:96px;height:15px;background:#4c9e7e;color:#eafff5;font-size:11px;font-weight:700;line-height:15px;text-align:center">EFFECTIVE</div>
<div style="left:153px;top:162px;font-size:16px;line-height:23px;color:#333;white-space:pre">AA-00011</div>
<div style="left:253px;top:162px;font-size:16px;line-height:23px;color:#333;white-space:pre">Projekterstellung für Benutzeroberflächen mit memo Q</div>
<div style="left:0;top:207px;width:788px;height:1px;background:#e2e2e2"></div>
<div style="left:146px;top:185px;width:1px;height:23px;background:#e6e6e6"></div>
<div style="left:246px;top:185px;width:1px;height:23px;background:#e6e6e6"></div>
<div style="left:27px;top:189px;width:96px;height:15px;background:#8f4fa3;color:#fbeeff;font-size:11px;font-weight:700;line-height:15px;text-align:center">TRAINING</div>
<div style="left:153px;top:185px;font-size:16px;line-height:23px;color:#333;white-space:pre">AA.00068</div>
<div style="left:253px;top:185px;font-size:16px;line-height:23px;color:#333;white-space:pre">Rechnungseingang - Zahlungsläufe</div>
<div style="left:0;top:230px;width:788px;height:1px;background:#e2e2e2"></div>
<div style="left:146px;top:208px;width:1px;height:23px;background:#e6e6e6"></div>
<div style="left:246px;top:208px;width:1px;height:23px;background:#e6e6e6"></div>
<div style="left:27px;top:212px;width:96px;height:15px;background:#4c9e7e;color:#eafff5;font-size:11px;font-weight:700;line-height:15px;text-align:center">EFFECTIVE</div>
<div style="left:153px;top:208px;font-size:16px;line-height:23px;color:#333;white-space:pre">AA.00067</div>
<div style="left:253px;top:208px;font-size:16px;line-height:23px;color:#333;white-space:pre">Firmeninterner Change Control Prozess</div>
<div style="left:0;top:253px;width:788px;height:1px;background:#e2e2e2"></div>
<div style="left:146px;top:231px;width:1px;height:23px;background:#e6e6e6"></div>
<div style="left:246px;top:231px;width:1px;height:23px;background:#e6e6e6"></div>
<div style="left:27px;top:235px;width:96px;height:15px;background:#8f4fa3;color:#fbeeff;font-size:11px;font-weight:700;line-height:15px;text-align:center">TRAINING</div>
<div style="left:153px;top:231px;font-size:16px;line-height:23px;color:#333;white-space:pre">AA-00010</div>
<div style="left:253px;top:231px;font-size:16px;line-height:23px;color:#333;white-space:pre">Aushang Zutrittskontrolle</div>
<div style="left:0;top:276px;width:788px;height:1px;background:#e2e2e2"></div>
<div style="left:146px;top:254px;width:1px;height:23px;background:#e6e6e6"></div>
<div style="left:246px;top:254px;width:1px;height:23px;background:#e6e6e6"></div>
<div style="left:27px;top:258px;width:96px;height:15px;background:#4c9e7e;color:#eafff5;font-size:11px;font-weight:700;line-height:15px;text-align:center">EFFECTIVE</div>
<div style="left:153px;top:254px;font-size:16px;line-height:23px;color:#333;white-space:pre">AA-00009</div>
<div style="left:253px;top:254px;font-size:16px;line-height:23px;color:#333;white-space:pre">Erstellung Reisekostenabrechnung ZEP</div>
<div style="left:0;top:299px;width:788px;height:1px;background:#e2e2e2"></div>
<div style="left:146px;top:277px;width:1px;height:23px;background:#e6e6e6"></div>
<div style="left:246px;top:277px;width:1px;height:23px;background:#e6e6e6"></div>
<div style="left:27px;top:281px;width:96px;height:15px;background:#4c9e7e;color:#eafff5;font-size:11px;font-weight:700;line-height:15px;text-align:center">EFFECTIVE</div>
<div style="left:153px;top:277px;font-size:16px;line-height:23px;color:#333;white-space:pre">AA.00055</div>
<div style="left:253px;top:277px;font-size:16px;line-height:23px;color:#333;white-space:pre">Erreichbarkeit und Reaktionszeiten Support</div>
<div style="left:0;top:322px;width:788px;height:1px;background:#e2e2e2"></div>
<div style="left:146px;top:300px;width:1px;height:23px;background:#e6e6e6"></div>
<div style="left:246px;top:300px;width:1px;height:23px;background:#e6e6e6"></div>
<div style="left:27px;top:304px;width:96px;height:15px;background:#4c9e7e;color:#eafff5;font-size:11px;font-weight:700;line-height:15px;text-align:center">EFFECTIVE</div>
<div style="left:153px;top:300px;font-size:16px;line-height:23px;color:#333;white-space:pre">AA.00054</div>
<div style="left:253px;top:300px;font-size:16px;line-height:23px;color:#333;white-space:pre">Produktivsetzungen beim Kunden</div>
<div style="left:0;top:345px;width:788px;height:1px;background:#e2e2e2"></div>
<div style="left:146px;top:323px;width:1px;height:23px;background:#e6e6e6"></div>
<div style="left:246px;top:323px;width:1px;height:23px;background:#e6e6e6"></div>
<div style="left:27px;top:327px;width:96px;height:15px;background:#4c9e7e;color:#eafff5;font-size:11px;font-weight:700;line-height:15px;text-align:center">EFFECTIVE</div>
<div style="left:153px;top:323px;font-size:16px;line-height:23px;color:#333;white-space:pre">AA.00053</div>
<div style="left:253px;top:323px;font-size:16px;line-height:23px;color:#333;white-space:pre">Arbeitszeiterfassung</div>
<div style="left:0;top:368px;width:788px;height:1px;background:#e2e2e2"></div>
<div style="left:146px;top:346px;width:1px;height:23px;background:#e6e6e6"></div>
<div style="left:246px;top:346px;width:1px;height:23px;background:#e6e6e6"></div>
<div style="left:27px;top:350px;width:96px;height:15px;background:#4c9e7e;color:#eafff5;font-size:11px;font-weight:700;line-height:15px;text-align:center">EFFECTIVE</div>
<div style="left:153px;top:346px;font-size:16px;line-height:23px;color:#333;white-space:pre">AA.00048</div>
<div style="left:253px;top:346px;font-size:16px;line-height:23px;color:#333;white-space:pre">Zutrittskontrolle aufschließen der Türen</div>
<div style="left:0;top:391px;width:788px;height:1px;background:#e2e2e2"></div>
<div style="left:146px;top:369px;width:1px;height:23px;background:#e6e6e6"></div>
<div style="left:246px;top:369px;width:1px;height:23px;background:#e6e6e6"></div>
<div style="left:27px;top:373px;width:96px;height:15px;background:#4c9e7e;color:#eafff5;font-size:11px;font-weight:700;line-height:15px;text-align:center">EFFECTIVE</div>
<div style="left:153px;top:369px;font-size:16px;line-height:23px;color:#333;white-space:pre">AA.00047</div>
<div style="left:253px;top:369px;font-size:16px;line-height:23px;color:#333;white-space:pre">Zutrittskontrolle Gebäude verschließen</div>
<div style="left:0;top:414px;width:788px;height:1px;background:#e2e2e2"></div>
<div style="left:146px;top:392px;width:1px;height:23px;background:#e6e6e6"></div>
<div style="left:246px;top:392px;width:1px;height:23px;background:#e6e6e6"></div>
<div style="left:27px;top:396px;width:96px;height:15px;background:#4c9e7e;color:#eafff5;font-size:11px;font-weight:700;line-height:15px;text-align:center">EFFECTIVE</div>
<div style="left:153px;top:392px;font-size:16px;line-height:23px;color:#333;white-space:pre">AA.00046</div>
<div style="left:253px;top:392px;font-size:16px;line-height:23px;color:#333;white-space:pre">Zutrittskontrolle Gebäude Öffnen</div>
<div style="left:0;top:437px;width:788px;height:1px;background:#e2e2e2"></div>
<div style="left:146px;top:415px;width:1px;height:23px;background:#e6e6e6"></div>
<div style="left:246px;top:415px;width:1px;height:23px;background:#e6e6e6"></div>
<div style="left:27px;top:419px;width:96px;height:15px;background:#4c9e7e;color:#eafff5;font-size:11px;font-weight:700;line-height:15px;text-align:center">EFFECTIVE</div>
<div style="left:153px;top:415px;font-size:16px;line-height:23px;color:#333;white-space:pre">SOP.00007</div>
<div style="left:253px;top:415px;font-size:16px;line-height:23px;color:#333;white-space:pre">Erstellen eines Testplans</div>
<div style="left:0;top:460px;width:788px;height:1px;background:#e2e2e2"></div>
<div style="left:146px;top:438px;width:1px;height:23px;background:#e6e6e6"></div>
<div style="left:246px;top:438px;width:1px;height:23px;background:#e6e6e6"></div>
<div style="left:27px;top:442px;width:96px;height:15px;background:#4c9e7e;color:#eafff5;font-size:11px;font-weight:700;line-height:15px;text-align:center">EFFECTIVE</div>
<div style="left:153px;top:438px;font-size:16px;line-height:23px;color:#333;white-space:pre">AA.00006</div>
<div style="left:253px;top:438px;font-size:16px;line-height:23px;color:#333;white-space:pre">Erstellen eines UC</div>
<div style="left:0;top:483px;width:788px;height:1px;background:#e2e2e2"></div>
<div style="left:146px;top:461px;width:1px;height:23px;background:#e6e6e6"></div>
<div style="left:246px;top:461px;width:1px;height:23px;background:#e6e6e6"></div>
<div style="left:27px;top:465px;width:96px;height:15px;background:#4c9e7e;color:#eafff5;font-size:11px;font-weight:700;line-height:15px;text-align:center">EFFECTIVE</div>
<div style="left:153px;top:461px;font-size:16px;line-height:23px;color:#333;white-space:pre">AA.00044</div>
<div style="left:253px;top:461px;font-size:16px;line-height:23px;color:#333;white-space:pre">Externe Lagerung der USB Backup Medien</div>
<div style="left:0;top:506px;width:788px;height:1px;background:#e2e2e2"></div>
<div style="left:146px;top:484px;width:1px;height:23px;background:#e6e6e6"></div>
<div style="left:246px;top:484px;width:1px;height:23px;background:#e6e6e6"></div>
<div style="left:27px;top:488px;width:96px;height:15px;background:#4c9e7e;color:#eafff5;font-size:11px;font-weight:700;line-height:15px;text-align:center">EFFECTIVE</div>
<div style="left:153px;top:484px;font-size:16px;line-height:23px;color:#333;white-space:pre">SOP-00001</div>
<div style="left:253px;top:484px;font-size:16px;line-height:23px;color:#333;white-space:pre">Umgang mit Sperrbestand</div>
<div style="left:0;top:529px;width:788px;height:1px;background:#e2e2e2"></div>
<div style="left:146px;top:507px;width:1px;height:23px;background:#e6e6e6"></div>
<div style="left:246px;top:507px;width:1px;height:23px;background:#e6e6e6"></div>
<div style="left:27px;top:511px;width:96px;height:15px;background:#e6a95c;color:#fff4c4;font-size:11px;font-weight:700;line-height:15px;text-align:center">CIRCULATION</div>
<div style="left:153px;top:507px;font-size:16px;line-height:23px;color:#333;white-space:pre">AA-00008</div>
<div style="left:253px;top:507px;font-size:16px;line-height:23px;color:#333;white-space:pre">RMA</div>
<div style="left:0;top:552px;width:788px;height:1px;background:#e2e2e2"></div>
<div style="left:146px;top:530px;width:1px;height:23px;background:#e6e6e6"></div>
<div style="left:246px;top:530px;width:1px;height:23px;background:#e6e6e6"></div>
<div style="left:27px;top:534px;width:96px;height:15px;background:#4c9e7e;color:#eafff5;font-size:11px;font-weight:700;line-height:15px;text-align:center">EFFECTIVE</div>
<div style="left:153px;top:530px;font-size:16px;line-height:23px;color:#333;white-space:pre">AA-00006</div>
<div style="left:253px;top:530px;font-size:16px;line-height:23px;color:#333;white-space:pre">Benutzung der Maschine THX-1138</div>
<div style="left:0;top:575px;width:788px;height:1px;background:#e2e2e2"></div>
<div style="left:146px;top:553px;width:1px;height:23px;background:#e6e6e6"></div>
<div style="left:246px;top:553px;width:1px;height:23px;background:#e6e6e6"></div>
<div style="left:27px;top:557px;width:96px;height:15px;background:#4c9e7e;color:#eafff5;font-size:11px;font-weight:700;line-height:15px;text-align:center">EFFECTIVE</div>
<div style="left:153px;top:553px;font-size:16px;line-height:23px;color:#333;white-space:pre">AA-00005</div>
<div style="left:253px;top:553px;font-size:16px;line-height:23px;color:#333;white-space:pre">Betreten des Labors in Gebäude 3, Untergeschoss</div>
<div style="left:0;top:598px;width:788px;height:1px;background:#e2e2e2"></div>
<div style="left:146px;top:576px;width:1px;height:23px;background:#e6e6e6"></div>
<div style="left:246px;top:576px;width:1px;height:23px;background:#e6e6e6"></div>
<div style="left:27px;top:580px;width:96px;height:15px;background:#4c9e7e;color:#eafff5;font-size:11px;font-weight:700;line-height:15px;text-align:center">EFFECTIVE</div>
<div style="left:153px;top:576px;font-size:16px;line-height:23px;color:#333;white-space:pre">VA-00005</div>
<div style="left:253px;top:576px;font-size:16px;line-height:23px;color:#333;white-space:pre">Dokumentenlenkung</div>
<div style="left:0;top:621px;width:788px;height:1px;background:#e2e2e2"></div>
<div style="left:146px;top:599px;width:1px;height:23px;background:#e6e6e6"></div>
<div style="left:246px;top:599px;width:1px;height:23px;background:#e6e6e6"></div>
<div style="left:27px;top:603px;width:96px;height:15px;background:#4c9e7e;color:#eafff5;font-size:11px;font-weight:700;line-height:15px;text-align:center">EFFECTIVE</div>
<div style="left:153px;top:599px;font-size:16px;line-height:23px;color:#333;white-space:pre">VA.00060</div>
<div style="left:253px;top:599px;font-size:16px;line-height:23px;color:#333;white-space:pre">Zentrale Datenträgervernichtung</div>
<div style="left:0;top:644px;width:788px;height:1px;background:#e2e2e2"></div>
<div style="left:146px;top:622px;width:1px;height:23px;background:#e6e6e6"></div>
<div style="left:246px;top:622px;width:1px;height:23px;background:#e6e6e6"></div>
<div style="left:27px;top:626px;width:96px;height:15px;background:#4c9e7e;color:#eafff5;font-size:11px;font-weight:700;line-height:15px;text-align:center">EFFECTIVE</div>
<div style="left:153px;top:622px;font-size:16px;line-height:23px;color:#333;white-space:pre">AA-00004</div>
<div style="left:253px;top:622px;font-size:16px;line-height:23px;color:#333;white-space:pre">Reinigungsanweisung für die Tablettenpressmaschine B4-XP</div>
<div style="left:0;top:667px;width:788px;height:1px;background:#e2e2e2"></div>
<div style="left:146px;top:645px;width:1px;height:23px;background:#e6e6e6"></div>
<div style="left:246px;top:645px;width:1px;height:23px;background:#e6e6e6"></div>
<div style="left:27px;top:649px;width:96px;height:15px;background:#4c9e7e;color:#eafff5;font-size:11px;font-weight:700;line-height:15px;text-align:center">EFFECTIVE</div>
<div style="left:153px;top:645px;font-size:16px;line-height:23px;color:#333;white-space:pre">AA-00003</div>
<div style="left:253px;top:645px;font-size:16px;line-height:23px;color:#333;white-space:pre">Reinigung Maschine ED-209</div>
<div style="left:0;top:690px;width:788px;height:1px;background:#e2e2e2"></div>
<div style="left:146px;top:668px;width:1px;height:23px;background:#e6e6e6"></div>
<div style="left:246px;top:668px;width:1px;height:23px;background:#e6e6e6"></div>
<div style="left:27px;top:672px;width:96px;height:15px;background:#3b76b8;color:#eef6ff;font-size:11px;font-weight:700;line-height:15px;text-align:center">WITHDRAWN</div>
<div style="left:153px;top:668px;font-size:16px;line-height:23px;color:#333;white-space:pre">VA.00060</div>
<div style="left:253px;top:668px;font-size:16px;line-height:23px;color:#333;white-space:pre">Zentrale Datenträgervernichtung</div>
<div style="left:0;top:713px;width:788px;height:1px;background:#e2e2e2"></div>
<div style="left:146px;top:691px;width:1px;height:23px;background:#e6e6e6"></div>
<div style="left:246px;top:691px;width:1px;height:23px;background:#e6e6e6"></div>
<div style="left:27px;top:695px;width:96px;height:15px;background:#4c9e7e;color:#eafff5;font-size:11px;font-weight:700;line-height:15px;text-align:center">EFFECTIVE</div>
<div style="left:153px;top:691px;font-size:16px;line-height:23px;color:#333;white-space:pre">QMH-00005</div>
<div style="left:253px;top:691px;font-size:16px;line-height:23px;color:#333;white-space:pre">Freigebe 2.10.0.5</div>
<div style="left:0;top:736px;width:788px;height:1px;background:#e2e2e2"></div>
<div style="left:146px;top:714px;width:1px;height:23px;background:#e6e6e6"></div>
<div style="left:246px;top:714px;width:1px;height:23px;background:#e6e6e6"></div>
<div style="left:27px;top:718px;width:96px;height:15px;background:#3b76b8;color:#eef6ff;font-size:11px;font-weight:700;line-height:15px;text-align:center">WITHDRAWN</div>
<div style="left:153px;top:714px;font-size:16px;line-height:23px;color:#333;white-space:pre">VA-00002</div>
<div style="left:253px;top:714px;font-size:16px;line-height:23px;color:#333;white-space:pre">Reinigung der Tablettenpressmaschine HAL 9000</div>
<div style="left:0;top:759px;width:788px;height:1px;background:#e2e2e2"></div>
<div style="left:146px;top:737px;width:1px;height:23px;background:#e6e6e6"></div>
<div style="left:246px;top:737px;width:1px;height:23px;background:#e6e6e6"></div>
<div style="left:27px;top:741px;width:96px;height:15px;background:#e6a95c;color:#fff4c4;font-size:11px;font-weight:700;line-height:15px;text-align:center">CIRCULATION</div>
<div style="left:153px;top:737px;font-size:16px;line-height:23px;color:#333;white-space:pre">QMH-00003</div>
<div style="left:253px;top:737px;font-size:16px;line-height:23px;color:#333;white-space:pre">Test QM-Handbuch 3</div>
</div>
<div style="left:1149px;top:250px;width:17px;height:743px;background:#f3f3f3"></div>
<svg style="position:absolute;left:1153px;top:256px;" width="9" height="6" viewBox="0 0 9 6"><path d="M0 6 H9 L4.5 0 Z" fill="#666"/></svg>
<div style="left:1150px;top:277px;width:15px;height:103px;background:#d2d2d2"></div>
<svg style="position:absolute;left:1153px;top:982px;" width="9" height="6" viewBox="0 0 9 6"><path d="M0 0 H9 L4.5 6 Z" fill="#666"/></svg>
<div style="left:361px;top:993px;width:805px;height:17px;background:#f2f2f2"></div>
<div style="left:380px;top:994px;width:71px;height:15px;background:#d6d6d6"></div>
<svg style="position:absolute;left:368px;top:998px;" width="6" height="9" viewBox="0 0 6 9"><path d="M6 0 V9 L0 4.5 Z" fill="#666"/></svg>
<svg style="position:absolute;left:1137px;top:998px;" width="6" height="9" viewBox="0 0 6 9"><path d="M0 0 V9 L6 4.5 Z" fill="#666"/></svg>
<div style="left:1171px;top:163px;width:11px;height:853px;background:#f3f3f3"></div>
<div style="left:1182px;top:162px;width:736px;height:854px;background:#f2f2f2;border-left:2px solid #cdcdcd;border-right:2px solid #cdcdcd"></div>
<div style="left:1184px;top:163px;width:732px;height:25px;background:#e4e4e4"></div>
<div style="left:1195px;top:162.0px;font-size:19.5px;color:#3c3c3c;font-weight:700;line-height:27px;white-space:pre;">Lesebereich</div>
<div style="left:1814px;top:164px;width:25px;height:23px;background:#f9f9f9;border:1px solid #dadada"></div>
<div style="left:1840px;top:164px;width:25px;height:23px;background:#f9f9f9;border:1px solid #dadada"></div>
<div style="left:1866px;top:164px;width:25px;height:23px;background:#f9f9f9;border:1px solid #dadada"></div>
<div style="left:1892px;top:164px;width:25px;height:23px;background:#f9f9f9;border:1px solid #dadada"></div>
<svg style="position:absolute;left:1818px;top:167px;" width="17" height="17" viewBox="0 0 17 17"><rect x="0.5" y="0.5" width="16" height="16" fill="#f4fbff" stroke="#4f6272" stroke-width="1.1"/></svg>
<svg style="position:absolute;left:1844px;top:167px;" width="17" height="17" viewBox="0 0 17 17"><rect x="0.5" y="0.5" width="16" height="16" fill="#f4fbff" stroke="#4f6272" stroke-width="1.1"/><path d="M8.5 0.5 V16.5" stroke="#7a8a95" stroke-width="1"/></svg>
<svg style="position:absolute;left:1870px;top:167px;" width="17" height="17" viewBox="0 0 17 17"><rect x="0.5" y="0.5" width="16" height="16" fill="#f4fbff" stroke="#4f6272" stroke-width="1.1"/><path d="M5.8 0.5 V16.5 M11.2 0.5 V16.5" stroke="#4f6272" stroke-width="1"/></svg>
<svg style="position:absolute;left:1896px;top:167px;" width="17" height="17" viewBox="0 0 17 17"><rect x="0.5" y="0.5" width="16" height="16" fill="#f4fbff" stroke="#4f6272" stroke-width="1.1"/><rect x="11" y="0.5" width="5.5" height="16" fill="#4a7aa8"/><path d="M3 8.5 H9 M6.5 6 L9 8.5 L6.5 11" fill="none" stroke="#4f6272" stroke-width="1"/></svg>
<div style="left:1184px;top:188px;width:732px;height:25px;background:#f2f2f2"></div>
<svg style="position:absolute;left:1193px;top:193px;" width="16" height="16" viewBox="0 0 16 16"><path d="M0.8 0.8 H13 L15.2 3 V15.2 H0.8 Z" fill="#fff" stroke="#3a6ea5" stroke-width="1.6"/><rect x="3.5" y="0.8" width="8" height="5" fill="#3a6ea5"/><rect x="9" y="1.6" width="1.5" height="3" fill="#fff"/><path d="M3.5 10 H12.5 M3.5 12.5 H12.5" stroke="#3a6ea5" stroke-width="1"/></svg>
<svg style="position:absolute;left:1227px;top:193px;" width="16" height="16" viewBox="0 0 16 16"><rect x="4" y="0.5" width="8" height="4.5" fill="#fff" stroke="#888"/><rect x="0.5" y="4.5" width="15" height="7" rx="1" fill="#888"/><rect x="3" y="4.5" width="10" height="3" fill="#3a6ea5"/><rect x="4" y="10.5" width="8" height="5" fill="#fff" stroke="#888"/></svg>
<svg style="position:absolute;left:1261px;top:193px;" width="16" height="16" viewBox="0 0 16 16"><circle cx="8" cy="8" r="8" fill="#3d9a6e"/><path d="M8 3.5 V12 M4.5 8.5 L8 12 L11.5 8.5" fill="none" stroke="#fff" stroke-width="1.8"/></svg>
<svg style="position:absolute;left:1295px;top:193px;" width="16" height="16" viewBox="0 0 16 16"><circle cx="8" cy="8" r="8" fill="#3d9a6e"/><path d="M8 12.5 V4 M4.5 7.5 L8 4 L11.5 7.5" fill="none" stroke="#fff" stroke-width="1.8"/></svg>
<svg style="position:absolute;left:1329px;top:193px;" width="16" height="16" viewBox="0 0 16 16"><rect x="0.5" y="0.5" width="6" height="15" fill="none" stroke="#333" stroke-dasharray="1.5 1.5"/><rect x="9" y="0.5" width="7" height="15" fill="#3a6ea5"/><path d="M3.5 2.5 V5 M3.5 11 V13.5" stroke="#3a6ea5" stroke-width="1.2"/></svg>
<svg style="position:absolute;left:1363px;top:193px;" width="16" height="16" viewBox="0 0 16 16"><rect x="0.5" y="0.5" width="15" height="6" fill="#3a6ea5"/><rect x="0.5" y="9" width="15" height="6.5" fill="none" stroke="#333" stroke-dasharray="1.5 1.5"/></svg>
<svg style="position:absolute;left:1397px;top:193px;" width="16" height="16" viewBox="0 0 16 16"><circle cx="6.5" cy="6.5" r="5.5" fill="#fff" stroke="#666" stroke-width="1.4"/><path d="M4 6.5 H9 M6.5 4 V9" stroke="#555" stroke-width="1.2"/><path d="M10.5 10.5 L15 15" stroke="#666" stroke-width="2"/></svg>
<svg style="position:absolute;left:1431px;top:193px;" width="16" height="16" viewBox="0 0 16 16"><circle cx="6.5" cy="6.5" r="5.5" fill="#fff" stroke="#666" stroke-width="1.4"/><path d="M4 6.5 H9" stroke="#555" stroke-width="1.2"/><path d="M10.5 10.5 L15 15" stroke="#666" stroke-width="2"/></svg>
<svg style="position:absolute;left:1465px;top:193px;" width="16" height="16" viewBox="0 0 16 16"><path d="M1 15 L7 4 V15 Z" fill="#6a5a9a"/><path d="M9 15 L15 15 L9 6 Z" fill="#bbb"/><path d="M9 1 A4 4 0 0 1 13 5" fill="none" stroke="#3a6ea5" stroke-width="1.2"/></svg>
<svg style="position:absolute;left:1499px;top:193px;" width="16" height="16" viewBox="0 0 16 16"><path d="M15 15 L9 4 V15 Z" fill="#6a5a9a"/><path d="M7 15 L1 15 L7 6 Z" fill="#bbb"/><path d="M7 1 A4 4 0 0 0 3 5" fill="none" stroke="#3a6ea5" stroke-width="1.2"/></svg>
<div style="left:1185px;top:213px;width:731px;height:2px;background:#8a8a8a"></div>
<div style="left:1185px;top:215px;width:712px;height:766px;background:#ababab;border-left:2px solid #909090"></div>
<div style="left:1897px;top:215px;width:19px;height:766px;background:#f0f0f0"></div>
<svg style="position:absolute;left:1901px;top:222px;" width="11" height="7" viewBox="0 0 11 7"><path d="M1 6 L5.5 1.5 L10 6" fill="none" stroke="#555" stroke-width="1.6"/></svg>
<div style="left:1899px;top:367px;width:14px;height:52px;background:#cdcdcd"></div>
<svg style="position:absolute;left:1901px;top:967px;" width="11" height="7" viewBox="0 0 11 7"><path d="M1 1 L5.5 5.5 L10 1" fill="none" stroke="#555" stroke-width="1.6"/></svg>
<div style="left:1184px;top:981px;width:732px;height:6px;background:#f2f2f2;border-top:2px solid #d0d0d0"></div>
<div style="left:1192px;top:993.0px;font-size:10.4px;color:#555;font-weight:400;line-height:15px;white-space:pre;">Vorschau</div>
<div style="left:1254px;top:993.0px;font-size:10.4px;color:#555;font-weight:400;line-height:15px;white-space:pre;">Attribute</div>
<div style="left:1315px;top:993.0px;font-size:10.4px;color:#555;font-weight:400;line-height:15px;white-space:pre;">Verknüpfungen</div>
<div style="left:1405px;top:993.0px;font-size:10.4px;color:#555;font-weight:400;line-height:15px;white-space:pre;">Weitere</div>
<div class="r" style="left:0;top:0;width:1920px;height:1080px;clip-path:inset(215px 23px 99px 1187px)">
<div style="left:1205px;top:225px;width:675px;height:900px;background:#fff;border:1px solid #000"></div>
<div style="left:1880px;top:229px;width:3px;height:900px;background:#000"></div>
<div style="left:1281px;top:265px;width:522px;height:1.2px;background:#111"></div>
<div style="left:1281px;top:321px;width:522px;height:1.2px;background:#111"></div>
<div style="left:1281px;top:347.5px;width:522px;height:1.2px;background:#111"></div>
<div style="left:1281px;top:265px;width:1.2px;height:84px;background:#111"></div>
<div style="left:1801.5px;top:265px;width:1.2px;height:84px;background:#111"></div>
<div style="left:1429px;top:265px;width:1.2px;height:57px;background:#111"></div>
<div style="left:1646px;top:265px;width:1.2px;height:57px;background:#111"></div>
<svg style="position:absolute;left:1284px;top:272px;" width="42" height="42" viewBox="0 0 42 42"><g transform="translate(21 21.3) scale(1.2179) translate(-24 -24)"><circle cx="24" cy="24" r="15.6" fill="none" stroke="#5f7d79" stroke-width="2.1"/><circle cx="24.2" cy="15.2" r="3.1" fill="#5f7d79"/><path d="M13.2 12.6 L14.6 12.1 C15.6 16.6 18 19.6 21.6 21.2 L20.6 23 C16.6 21 14 17.6 13.2 12.6 Z" fill="#5f7d79"/><path d="M34.6 14.2 C33.5 19 29.5 22 25 23.5 C21 25 19 29 19.3 33 C19.5 36 20.3 38 21 39.4 L23 39.4 C22.3 37 22 35 22.2 32.5 C22.5 28.5 24.5 26 27.5 25 C31 23.5 34 20 35.9 14.8 Z" fill="#5f7d79"/></g></svg>
<div style="left:1333px;top:274.7876px;font-size:13.6px;color:#3a3a3a;font-weight:400;line-height:18px;white-space:pre;letter-spacing:0.3px"><span style="font-size:17.5px">D</span>IGITAL</div>
<div style="left:1333px;top:295.42925px;font-size:15.5px;color:#4a4a4a;font-weight:400;line-height:20px;white-space:pre;">Life Sciences</div>
<div style="left:938px;top:273.3946px;width:1200px;text-align:center;font-size:15.6px;color:#1a1a1a;font-weight:700;line-height:20px;white-space:pre;">Standard Operation</div>
<div style="left:938px;top:294.2946px;width:1200px;text-align:center;font-size:15.6px;color:#1a1a1a;font-weight:700;line-height:20px;white-space:pre;">Procedure</div>
<div style="left:1124px;top:284.12925px;width:1200px;text-align:center;font-size:15.5px;color:#8a8a8a;font-weight:700;line-height:20px;white-space:pre;">SOP-00002</div>
<div style="left:941px;top:324.99855px;width:1200px;text-align:center;font-size:15.3px;color:#8a8a8a;font-weight:700;line-height:20px;white-space:pre;">Reinigung Labortische</div>
<div style="left:1285px;top:362.5px;font-size:18px;color:#111;font-weight:700;line-height:24px;white-space:pre;">1</div>
<div style="left:1309px;top:362.5px;font-size:18px;color:#111;font-weight:700;line-height:24px;white-space:pre;">Ziel und Zweck</div>
<div style="left:1285px;top:390.0px;font-size:11.7px;color:#222;font-weight:400;line-height:15px;white-space:pre;">Diese SOP legt einheitliche, nachvollziehbare Maßnahmen zur Reinigung und (wo erforderlich)</div>
<div style="left:1285px;top:406.0px;font-size:11.7px;color:#222;font-weight:400;line-height:15px;white-space:pre;">Desinfektion aller Labortische fest, um</div>
<div style="left:1306px;top:443.0px;width:4px;height:4px;background:#222;border-radius:2px"></div>
<div style="left:1325.5px;top:437.0px;font-size:11.95px;color:#222;font-weight:400;line-height:15px;white-space:pre;">die Einhaltung der Anforderungen an Kontaminationskontrolle gemäß</div>
<div style="left:1325.5px;top:453.0px;font-size:11.5px;color:#222;font-weight:400;line-height:15px;white-space:pre;">ISO 13485 (-6.4 Work Environment / 6.4.2 Contamination Control) sicherzustellen,</div>
<div style="left:1306px;top:491.0px;width:4px;height:4px;background:#222;border-radius:2px"></div>
<div style="left:1325.5px;top:485.0px;font-size:11.8px;color:#222;font-weight:400;line-height:15px;white-space:pre;">die Sauberkeits- bzw. Partikelgrenzwerte der für das Unternehmen relevanten</div>
<div style="left:1325.5px;top:500.5px;font-size:11.3px;color:#222;font-weight:400;line-height:15px;white-space:pre;">Reinraumklasse nach ISO 14644 einzuhalten,</div>
<div style="left:1306px;top:538.0px;width:4px;height:4px;background:#222;border-radius:2px"></div>
<div style="left:1325.5px;top:532.0px;font-size:11.9px;color:#222;font-weight:400;line-height:15px;white-space:pre;">Produkt-, Mitarbeiter- und Patientensicherheit zu gewährleisten.</div>
<div style="left:1285px;top:561.5px;font-size:18px;color:#111;font-weight:700;line-height:24px;white-space:pre;">2</div>
<div style="left:1309px;top:561.5px;font-size:17.6px;color:#111;font-weight:700;line-height:24px;white-space:pre;">Geltungsbereich</div>
<div style="left:1285px;top:589.5px;font-size:15.8px;color:#8a8a8a;font-weight:700;line-height:20px;white-space:pre;">Qualitätskontrolle</div>
<div style="left:1285px;top:639.5px;font-size:18px;color:#111;font-weight:700;line-height:24px;white-space:pre;">3</div>
<div style="left:1309px;top:639.5px;font-size:17.4px;color:#111;font-weight:700;line-height:24px;white-space:pre;">Beschreibung des Ablaufes</div>
<div style="left:1279.5px;top:680px;width:521.5px;height:1.3px;background:#111"></div>
<div style="left:1279.5px;top:696px;width:521.5px;height:1.3px;background:#111"></div>
<div style="left:1279.5px;top:832px;width:521.5px;height:1.3px;background:#111"></div>
<div style="left:1279.5px;top:893px;width:521.5px;height:1.3px;background:#111"></div>
<div style="left:1279.5px;top:680px;width:1.3px;height:320px;background:#111"></div>
<div style="left:1365px;top:680px;width:1.3px;height:320px;background:#111"></div>
<div style="left:1517px;top:680px;width:1.3px;height:320px;background:#111"></div>
<div style="left:1800px;top:680px;width:1.3px;height:320px;background:#111"></div>
<div style="left:1285px;top:681.0px;font-size:11.2px;color:#1e1e1e;font-weight:400;line-height:15px;white-space:pre;">Schritt</div>
<div style="left:1371.5px;top:681.0px;font-size:11.2px;color:#1e1e1e;font-weight:400;line-height:15px;white-space:pre;">Verantwortlich</div>
<div style="left:1524px;top:681.0px;font-size:11.2px;color:#1e1e1e;font-weight:400;line-height:15px;white-space:pre;">Beschreibung</div>
<div style="left:1285px;top:697.5px;font-size:11.2px;color:#1e1e1e;font-weight:400;line-height:15px;white-space:pre;">Vorbereitung</div>
<div style="left:1371.5px;top:697.5px;font-size:11.2px;color:#1e1e1e;font-weight:400;line-height:15px;white-space:pre;">Reinigungskraft / Operator</div>
<div style="left:1524px;top:697.5px;font-size:11.2px;color:#1e1e1e;font-weight:400;line-height:15px;white-space:pre;">* Persönliche Schutzausrüstung (PSA) nach Reinraum-</div>
<div style="left:1524px;top:712.53px;font-size:11.2px;color:#1e1e1e;font-weight:400;line-height:15px;white-space:pre;">bzw. Hygienestufe anlegen (Haube, Handschuhe, ggf.</div>
<div style="left:1524px;top:727.56px;font-size:11.2px;color:#1e1e1e;font-weight:400;line-height:15px;white-space:pre;">Mund-/Maskenschutz).</div>
<div style="left:1524px;top:742.59px;font-size:11.2px;color:#1e1e1e;font-weight:400;line-height:15px;white-space:pre;">* Reinigungswagen mit freigegebenen</div>
<div style="left:1524px;top:757.62px;font-size:11.2px;color:#1e1e1e;font-weight:400;line-height:15px;white-space:pre;">Verbrauchsmaterialien bereitstellen: sterile, fusselfreie</div>
<div style="left:1524px;top:772.65px;font-size:11.2px;color:#1e1e1e;font-weight:400;line-height:15px;white-space:pre;">Wipes (ISO Class-geeignet), 70 % IPA oder validiertes</div>
<div style="left:1524px;top:787.68px;font-size:11.2px;color:#1e1e1e;font-weight:400;line-height:15px;white-space:pre;">Desinfektionsmittel, DI-Wasser, gekennzeichnete</div>
<div style="left:1524px;top:802.71px;font-size:11.2px;color:#1e1e1e;font-weight:400;line-height:15px;white-space:pre;">Abfallbeutel.</div>
<div style="left:1285px;top:833.5px;font-size:11.2px;color:#1e1e1e;font-weight:400;line-height:15px;white-space:pre;">Sichtprüfung</div>
<div style="left:1371.5px;top:833.5px;font-size:11.2px;color:#1e1e1e;font-weight:400;line-height:15px;white-space:pre;">Operator</div>
<div style="left:1524px;top:833.5px;font-size:11.2px;color:#1e1e1e;font-weight:400;line-height:15px;white-space:pre;">* Tisch frei räumen; verbliebene Komponenten in</div>
<div style="left:1524px;top:848.53px;font-size:11.2px;color:#1e1e1e;font-weight:400;line-height:15px;white-space:pre;">geschlossenen, gekennzeichneten Behältern lagern.</div>
<div style="left:1524px;top:863.56px;font-size:11.2px;color:#1e1e1e;font-weight:400;line-height:15px;white-space:pre;">* Grobe Verunreinigungen (Späne, Pulver) mit</div>
<div style="left:1524px;top:878.59px;font-size:11.2px;color:#1e1e1e;font-weight:400;line-height:15px;white-space:pre;">Reinraum-Staubsauger entfernen.</div>
<div style="left:1285px;top:894.5px;font-size:11.2px;color:#1e1e1e;font-weight:400;line-height:15px;white-space:pre;">Reinigung</div>
<div style="left:1371.5px;top:894.5px;font-size:11.2px;color:#1e1e1e;font-weight:400;line-height:15px;white-space:pre;">Operator</div>
<div style="left:1524px;top:894.5px;font-size:11.2px;color:#1e1e1e;font-weight:400;line-height:15px;white-space:pre;">Reihenfolge „sauber → weniger sauber“:</div>
<div style="left:1524px;top:909.53px;font-size:11.2px;color:#1e1e1e;font-weight:400;line-height:15px;white-space:pre;">1. Oberfläche mit DI-Wasser-getränktem Wipe</div>
<div style="left:1524px;top:924.56px;font-size:11.2px;color:#1e1e1e;font-weight:400;line-height:15px;white-space:pre;">abwischen (Top-down, linear, überlappend; jedes</div>
<div style="left:1524px;top:939.59px;font-size:11.2px;color:#1e1e1e;font-weight:400;line-height:15px;white-space:pre;">Wipe max. 0,25 m²).</div>
<div style="left:1524px;top:954.62px;font-size:11.2px;color:#1e1e1e;font-weight:400;line-height:15px;white-space:pre;">2. Mit neuem Wipe 70 % IPA applizieren – Einwirkzeit</div>
<div style="left:1524px;top:969.65px;font-size:11.2px;color:#1e1e1e;font-weight:400;line-height:15px;white-space:pre;">≥ 30 s (falls Desinfektion gefordert: gemäß Prüfliste</div>
<div style="left:1703px;top:695px;width:330px;height:12px;font-size:9.5px;line-height:12px;color:#c8c8c8;text-align:center;white-space:pre;transform:rotate(-90deg)">356 Effective (gelenkt) / Review am: 17.07.2027 - ehei / 08.09.2025 11:25:07</div>
</div>
<svg style="position:absolute;left:16px;top:1052px;" width="17" height="17" viewBox="0 0 17 17"><path d="M0 2.3 L7 1.3 V8 H0 Z M8 1.2 L16.5 0 V8 H8 Z M0 9 H7 V15.7 L0 14.7 Z M8 9 H16.5 V17 L8 15.8 Z" fill="#fff"/></svg>
<div style="left:48px;top:1040px;width:344px;height:40px;background:#f0f0f0"></div>
<svg style="position:absolute;left:60px;top:1052px;" width="17" height="17" viewBox="0 0 17 17"><circle cx="10.5" cy="6.3" r="5.3" fill="none" stroke="#111" stroke-width="1.2"/><path d="M6.8 10 L0.8 16" stroke="#111" stroke-width="1.3"/></svg>
<div style="left:88px;top:1049.5px;font-size:15px;color:#222;font-weight:400;line-height:21px;white-space:pre;">Suchbegriff hier eingeben</div>
<svg style="position:absolute;left:407px;top:1051px;" width="18" height="16" viewBox="0 0 18 16"><path d="M1 1 H12 M1 15 H12" stroke="#fff" stroke-width="1.3"/><rect x="1.5" y="4" width="10" height="8" fill="none" stroke="#fff" stroke-width="1.3"/><path d="M15 2 V4 M15 6 V14" stroke="#fff" stroke-width="1.6"/></svg>
<svg style="position:absolute;left:455px;top:1049px;" width="23" height="20" viewBox="0 0 23 20"><path d="M0.5 2 H8 L10 4 H22.5 V19.5 H0.5 Z" fill="#f4c955"/><path d="M0.5 6 H22.5 V19.5 H0.5 Z" fill="#f8d568"/><rect x="6" y="11" width="11" height="8.5" fill="#3c7fc4"/><rect x="8.5" y="14" width="6" height="5.5" fill="#f8d568"/></svg>
<svg style="position:absolute;left:503px;top:1047px;" width="25" height="25" viewBox="0 0 25 25"><circle cx="9.5" cy="9.5" r="7" fill="none" stroke="#b9c9dc" stroke-width="4" stroke-dasharray="2.4 1.6"/><circle cx="9.5" cy="9.5" r="4.5" fill="none" stroke="#dce6f2" stroke-width="2.6"/><circle cx="18.5" cy="18.5" r="4.5" fill="none" stroke="#b9c9dc" stroke-width="3" stroke-dasharray="1.8 1.2"/><circle cx="18.5" cy="18.5" r="2.6" fill="none" stroke="#dce6f2" stroke-width="1.8"/></svg>
<svg style="position:absolute;left:553px;top:1048px;" width="24" height="24" viewBox="0 0 24 24"><circle cx="12" cy="12" r="11.5" fill="#fff"/><circle cx="12.5" cy="7" r="2" fill="#b24a3a"/><path d="M6 5 C7 9 10 11 13 11 C16 11 18 8.5 18.5 5.5" fill="none" stroke="#b24a3a" stroke-width="1.3"/><path d="M16 10 C12.5 12 11 15 11.5 19 L12 22 L13.5 22 L13 19 C13 16 14.5 13 17 11 Z" fill="#b24a3a"/></svg>
<div style="left:602px;top:1048px;width:25px;height:24px;background:#de1a4c"></div>
<div style="left:14.5px;top:1050.0px;width:1200px;text-align:center;font-size:17px;color:#fff;font-weight:400;line-height:20px;white-space:pre;">lv</div>
<div style="left:650px;top:1048px;width:26px;height:24px;background:#de1a4c"></div>
<div style="left:63px;top:1050.0px;width:1200px;text-align:center;font-size:17px;color:#fff;font-weight:400;line-height:20px;white-space:pre;">ad</div>
<svg style="position:absolute;left:700px;top:1048px;" width="25" height="25" viewBox="0 0 25 25"><circle cx="12.5" cy="12.5" r="12" fill="#db4437"/><path d="M12.5 12.5 L2.1 18.5 A12 12 0 0 0 12.5 24.5 A12 12 0 0 0 22.9 18.5 Z" fill="#0f9d58"/><path d="M12.5 12.5 L22.9 18.5 A12 12 0 0 0 22.9 6.5 L12.5 6.5 Z" fill="#f4c20d"/><circle cx="12.5" cy="12.5" r="5.6" fill="#fff"/><circle cx="12.5" cy="12.5" r="4.3" fill="#4285f4"/></svg>
<div style="left:737px;top:1040px;width:48px;height:40px;background:#2e2e2e"></div>
<div style="left:737px;top:1078px;width:48px;height:2px;background:#8fb4e0"></div>
<svg style="position:absolute;left:749px;top:1048px;" width="24" height="24" viewBox="0 0 24 24"><circle cx="12" cy="12" r="11.5" fill="#f4f8f7"/><circle cx="12.5" cy="7" r="2" fill="#4a8a7e"/><path d="M6 5 C7 9 10 11 13 11 C16 11 18 8.5 18.5 5.5" fill="none" stroke="#4a8a7e" stroke-width="1.3"/><path d="M16 10 C12.5 12 11 15 11.5 19 L12 22 L13.5 22 L13 19 C13 16 14.5 13 17 11 Z" fill="#4a8a7e"/></svg>
<svg style="position:absolute;left:1734px;top:1055px;" width="13" height="8" viewBox="0 0 13 8"><path d="M1 7 L6.5 1.5 L12 7" fill="none" stroke="#fff" stroke-width="1.3"/></svg>
<svg style="position:absolute;left:1754px;top:1051px;" width="18" height="18" viewBox="0 0 18 18"><path d="M1 6 H4 L9 2 V15 L4 11 H1 Z" fill="none" stroke="#fff" stroke-width="1.1"/><circle cx="13.5" cy="13" r="3.6" fill="#e04343"/><path d="M12 11.5 L15 14.5 M15 11.5 L12 14.5" stroke="#fff" stroke-width="1"/></svg>
<svg style="position:absolute;left:1780px;top:1053px;" width="18" height="17" viewBox="0 0 18 17"><rect x="3.5" y="1.5" width="13" height="9" fill="none" stroke="#fff" stroke-width="1.1"/><path d="M2.5 1 V12.5 M1 2.5 H4.5 V5 H1 Z M7 14.5 H13 M10 10.5 V14.5" fill="none" stroke="#fff" stroke-width="1.1"/></svg>
<div style="left:1233px;top:1042.5px;width:1200px;text-align:center;font-size:11.2px;color:#fff;font-weight:400;line-height:16px;white-space:pre;">11:31</div>
<div style="left:1233px;top:1060.5px;width:1200px;text-align:center;font-size:11.1px;color:#fff;font-weight:400;line-height:16px;white-space:pre;">08.09.2025</div>
<svg style="position:absolute;left:1878px;top:1050px;" width="24" height="24" viewBox="0 0 24 24"><path d="M1 1 H17 V13 H7 L3 17 V13 H1 Z" fill="#fff"/><path d="M4 4.5 H14 M4 7 H14 M4 9.5 H11" stroke="#0d0d0d" stroke-width="1"/><circle cx="16.5" cy="16.5" r="6.5" fill="#3a3a3a" stroke="#d0d0d0" stroke-width="0.8"/><text x="16.5" y="20.3" font-family="Liberation Sans" font-size="10" font-weight="700" fill="#fff" text-anchor="middle">2</text></svg>
</body></html>
